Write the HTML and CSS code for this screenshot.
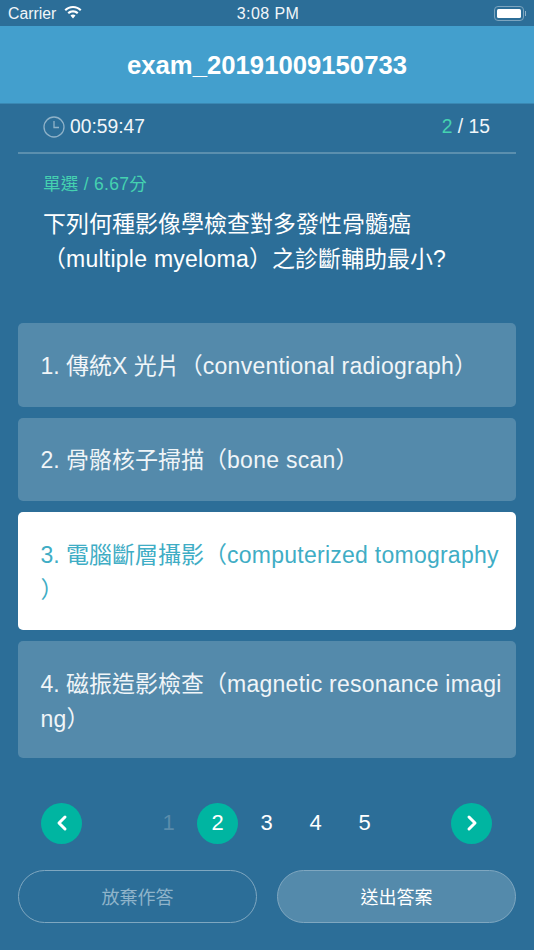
FILE: index.html
```html
<!DOCTYPE html>
<html lang="zh-Hant">
<head>
<meta charset="utf-8">
<title>exam</title>
<link rel="stylesheet" href="styles.css">
</head>
<body>
<div class="status">
  <div class="status-left"><span>Carrier</span>
    <svg class="wifi" width="18" height="13" viewBox="0 0 18 13"><path fill="#fff" d="M9 0C5.700 0 2.700 1.300.5 3.400l1.500 1.600C3.800 3.200 6.300 2.100 9 2.100s5.200 1.100 7 2.900l1.500-1.600C15.300 1.300 12.300 0 9 0zM9 4.300c-2.100 0-4 .8-5.500 2.200l1.500 1.600C6 7 7.400 6.400 9 6.400s3 .6 4 1.700l1.500-1.600C13 5.100 11.100 4.300 9 4.300zM9 8.600c-1 0-1.900.4-2.500 1L9 12.500l2.500-2.900c-.6-.6-1.500-1-2.500-1z"/></svg>
  </div>
  <div class="status-time">3:08 PM</div>
  <div class="battery"><span class="battery-body"><span class="battery-fill"></span></span><span class="battery-tip"></span></div>
</div>
<header class="title-bar">exam_20191009150733</header>
<main class="content">
  <div class="progress">
    <div class="timer">
      <svg width="22" height="22" viewBox="0 0 22 22" fill="none" stroke="#8fb2c8" stroke-width="1.300"><circle cx="11" cy="11" r="10"/><path d="M11 5v6.500h5"/></svg>
      <span>00:59:47</span>
    </div>
    <div class="count"><span class="count-now">2</span> / 15</div>
  </div>
  <section class="question">
    <div class="meta">單選 / 6.67分</div>
    <div class="stem">下列何種影像學檢查對多發性骨髓癌<br>（<span class="en">multiple myeloma</span>）之診斷輔助最小?</div>
  </section>
  <div class="options">
    <div class="option">1. 傳統X 光片（<span class="en">conventional radiograph</span>）</div>
    <div class="option">2. 骨骼核子掃描（<span class="en">bone scan</span>）</div>
    <div class="option selected">3. 電腦斷層攝影（<span class="en">computerized tomography</span><br>）</div>
    <div class="option tall">4. 磁振造影檢查（<span class="en">magnetic resonance imagi<br>ng</span>）</div>
  </div>
  <nav class="pager">
    <div class="arrow"><svg width="12" height="18" viewBox="0 0 12 18" fill="none" stroke="#fff" stroke-width="3" stroke-linecap="round" stroke-linejoin="round"><path d="M9 3 3 9l6 6"/></svg></div>
    <div class="pages">
      <span class="page disabled">1</span>
      <span class="page current">2</span>
      <span class="page">3</span>
      <span class="page">4</span>
      <span class="page">5</span>
    </div>
    <div class="arrow"><svg width="12" height="18" viewBox="0 0 12 18" fill="none" stroke="#fff" stroke-width="3" stroke-linecap="round" stroke-linejoin="round"><path d="M3 3l6 6-6 6"/></svg></div>
  </nav>
  <div class="actions">
    <div class="btn btn-ghost">放棄作答</div>
    <div class="btn btn-solid">送出答案</div>
  </div>
</main>
</body>
</html>
```
FILE: styles.css
```css
* { box-sizing: border-box; }
html, body { margin: 0; padding: 0; }
body {
  width: 534px;
  height: 950px;
  overflow: hidden;
  background: #2c6e98;
  color: #fff;
  font-family: "Liberation Sans", "Noto Sans CJK TC", sans-serif;
}
.status {
  height: 26px;
  display: grid;
  grid-template-columns: 1fr auto 1fr;
  align-items: center;
  padding: 1px 8px 0 8px;
  font-size: 15.800px;
  color: #f2f6f9;
}
.status-left { display: flex; align-items: center; gap: 8px; }
.wifi { margin-top: -2px; }
.status-time { font-size: 16px; letter-spacing: .4px; padding-left: 2px; }
.battery { justify-self: end; display: flex; align-items: center; }
.battery-body {
  width: 30px; height: 15px; padding: 2px;
  border: 1.500px solid #7da5bf; border-radius: 4px; display: block;
}
.battery-fill { display: block; height: 100%; background: #fff; border-radius: 1.500px; }
.battery-tip { width: 1px; height: 5px; margin-left: 1px; background: #8fb2c8; }
.title-bar {
  height: 78px;
  padding-top: 1px;
  background: #439fcd;
  border-bottom: 1px solid #3a88b3;
  display: flex; align-items: center; justify-content: center;
  font-size: 25.700px; font-weight: 700;
}
.content { padding: 0 18px; }
.progress {
  height: 50px;
  display: flex; align-items: center; justify-content: space-between;
  padding: 0 26px 2px 25px;
  border-bottom: 2px solid #5b8fae;
  font-size: 19.300px;
  color: #f1f6f9;
}
.timer { display: flex; align-items: center; gap: 5px; }
.count-now { color: #45d2b0; }
.question { padding: 19px 25px 0; height: 169px; }
.meta { font-size: 17.500px; line-height: 22px; color: #45d2b0; letter-spacing: .3px; }
.stem { margin-top: 12px; font-size: 23px; line-height: 35px; }
.en { letter-spacing: .25px; }
.options { display: flex; flex-direction: column; gap: 11px; }
.option {
  background: #548aab;
  border-radius: 5px;
  padding: 25.500px 12px 0 22.500px;
  min-height: 83.500px;
  font-size: 23px;
  line-height: 35px;
  color: #f0f5f8;
  white-space: nowrap;
}
.option.selected { background: #fff; color: #3fadc5; padding-top: 26px; padding-bottom: 21.500px; }
.option.tall { padding-top: 26px; padding-bottom: 21.500px; }
.pager {
  margin-top: 44px;
  padding: 0 24px 0 23px;
  height: 42px;
  display: flex; align-items: center; justify-content: space-between;
}
.arrow, .page {
  width: 41px; height: 41px; border-radius: 50%;
  display: flex; align-items: center; justify-content: center;
}
.arrow { background: #00b5a1; }
.pages { display: flex; gap: 8px; font-size: 22px; }
.page.disabled { color: #5a8cab; }
.page.current { background: #00b5a1; }
.actions { margin-top: 25.500px; display: flex; justify-content: space-between; }
.btn {
  width: 239px; height: 53.500px; border-radius: 27px;
  border: 1px solid #7fa7c0;
  display: flex; align-items: center; justify-content: center;
  font-size: 18px; font-weight: 400;
}
.btn-ghost { color: #8fb4ca; }
.btn-solid { background: #548aab; color: #fff; }
```
